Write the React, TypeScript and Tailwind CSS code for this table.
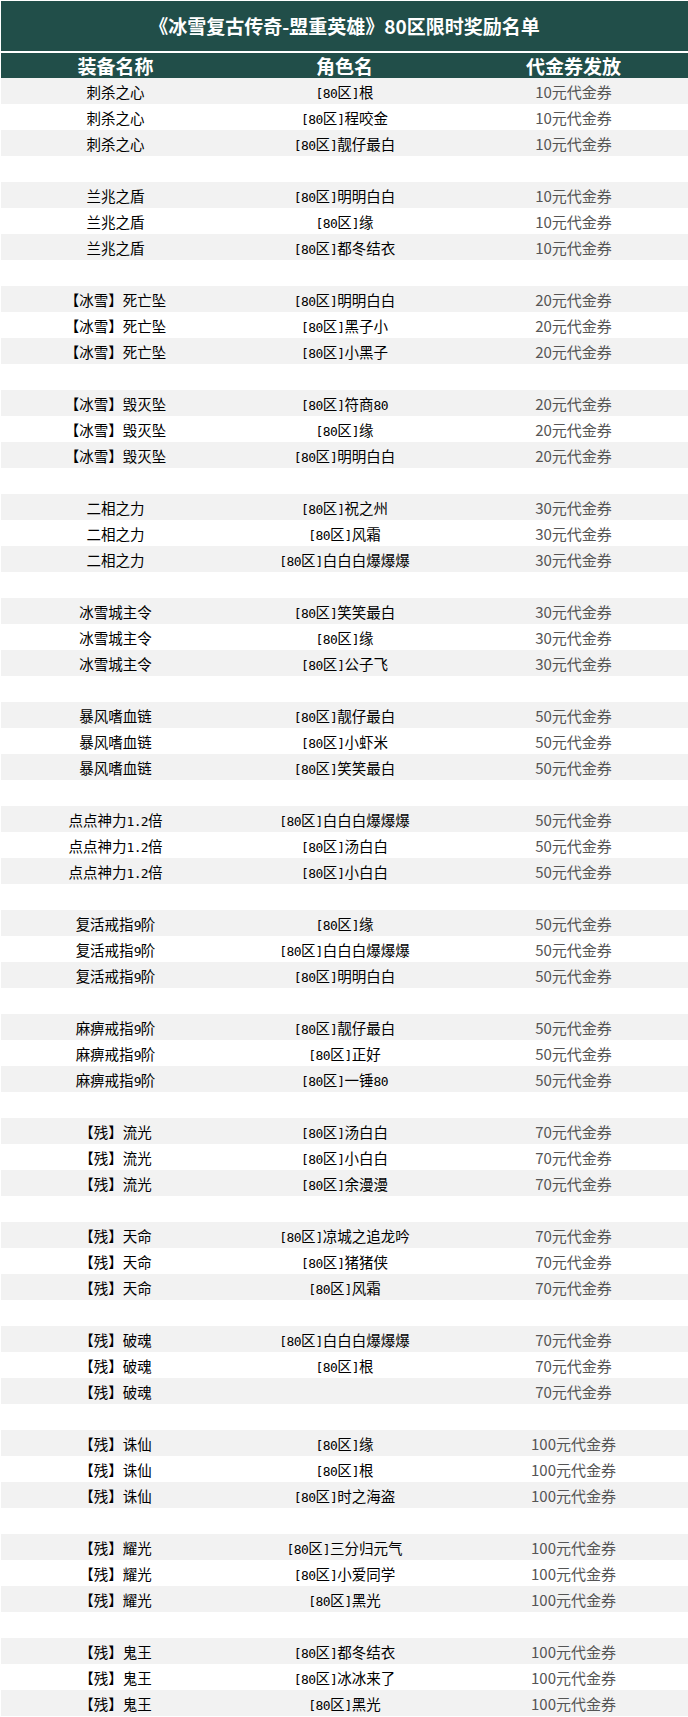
const GROUPS: { item: string; names: string[]; reward: string }[] = [
  { item: '刺杀之心', names: ['根', '程咬金', '靓仔最白'], reward: '10元代金券' },
  { item: '兰兆之盾', names: ['明明白白', '缘', '都冬结衣'], reward: '10元代金券' },
  { item: '【冰雪】死亡坠', names: ['明明白白', '黑子小', '小黑子'], reward: '20元代金券' },
  { item: '【冰雪】毁灭坠', names: ['符商80', '缘', '明明白白'], reward: '20元代金券' },
  { item: '二相之力', names: ['祝之州', '风霜', '白白白爆爆爆'], reward: '30元代金券' },
  { item: '冰雪城主令', names: ['笑笑最白', '缘', '公子飞'], reward: '30元代金券' },
  { item: '暴风嗜血链', names: ['靓仔最白', '小虾米', '笑笑最白'], reward: '50元代金券' },
  { item: '点点神力1.2倍', names: ['白白白爆爆爆', '汤白白', '小白白'], reward: '50元代金券' },
  { item: '复活戒指9阶', names: ['缘', '白白白爆爆爆', '明明白白'], reward: '50元代金券' },
  { item: '麻痹戒指9阶', names: ['靓仔最白', '正好', '一锤80'], reward: '50元代金券' },
  { item: '【残】流光', names: ['汤白白', '小白白', '余漫漫'], reward: '70元代金券' },
  { item: '【残】天命', names: ['凉城之追龙吟', '猪猪侠', '风霜'], reward: '70元代金券' },
  { item: '【残】破魂', names: ['白白白爆爆爆', '根', ''], reward: '70元代金券' },
  { item: '【残】诛仙', names: ['缘', '根', '时之海盗'], reward: '100元代金券' },
  { item: '【残】耀光', names: ['三分归元气', '小爱同学', '黑光'], reward: '100元代金券' },
  { item: '【残】鬼王', names: ['都冬结衣', '冰冰来了', '黑光'], reward: '100元代金券' },
];

const FONT = "font-['Noto_Sans_CJK_SC',sans-serif]";

// SimSun-style text: ASCII runs are half-width, so set them in a narrow mono face.
function Sun({ text }: { text: string }) {
  const parts = text.match(/[\x20-\x7e]+|[^\x20-\x7e]+/g) ?? [];
  return (
    <span className="pt-[2px] text-[14.5px] leading-none text-black">
      {parts.map((p, i) =>
        /^[\x20-\x7e]+$/.test(p) ? (
          <span key={i} className="font-['DejaVu_Sans_Mono',monospace] text-[13px] tracking-[-0.6px]">
            {p}
          </span>
        ) : (
          <span key={i}>{p}</span>
        ),
      )}
    </span>
  );
}

function Row({ item, name, reward, shaded }: { item: string; name: string; reward: string; shaded: boolean }) {
  return (
    <div className={`grid h-[26px] grid-cols-3 items-center text-center ${shaded ? 'bg-[#f2f2f2]' : 'bg-white'}`}>
      <Sun text={item} />
      <Sun text={name ? `[80区]${name}` : ''} />
      <span className="text-[15px] leading-none text-[#555555]">{reward}</span>
    </div>
  );
}

export default function App() {
  return (
    <div className={`w-[688px] bg-white pl-px pt-px ${FONT}`}>
      <div className="flex h-[50px] items-center justify-center bg-[#214e49] text-[19px] font-bold text-white">
        《冰雪复古传奇-盟重英雄》80区限时奖励名单
      </div>
      <div className="mt-[2px] grid h-[25px] grid-cols-3 items-center bg-[#214e49] text-center text-[19px] font-bold leading-none text-white">
        <span>装备名称</span>
        <span>角色名</span>
        <span>代金券发放</span>
      </div>
      {GROUPS.map((g, gi) => (
        <div key={g.item}>
          {g.names.map((n, i) => (
            <Row key={i} item={g.item} name={n} reward={g.reward} shaded={i !== 1} />
          ))}
          {gi < GROUPS.length - 1 && <div className="h-[26px] bg-white" />}
        </div>
      ))}
    </div>
  );
}
